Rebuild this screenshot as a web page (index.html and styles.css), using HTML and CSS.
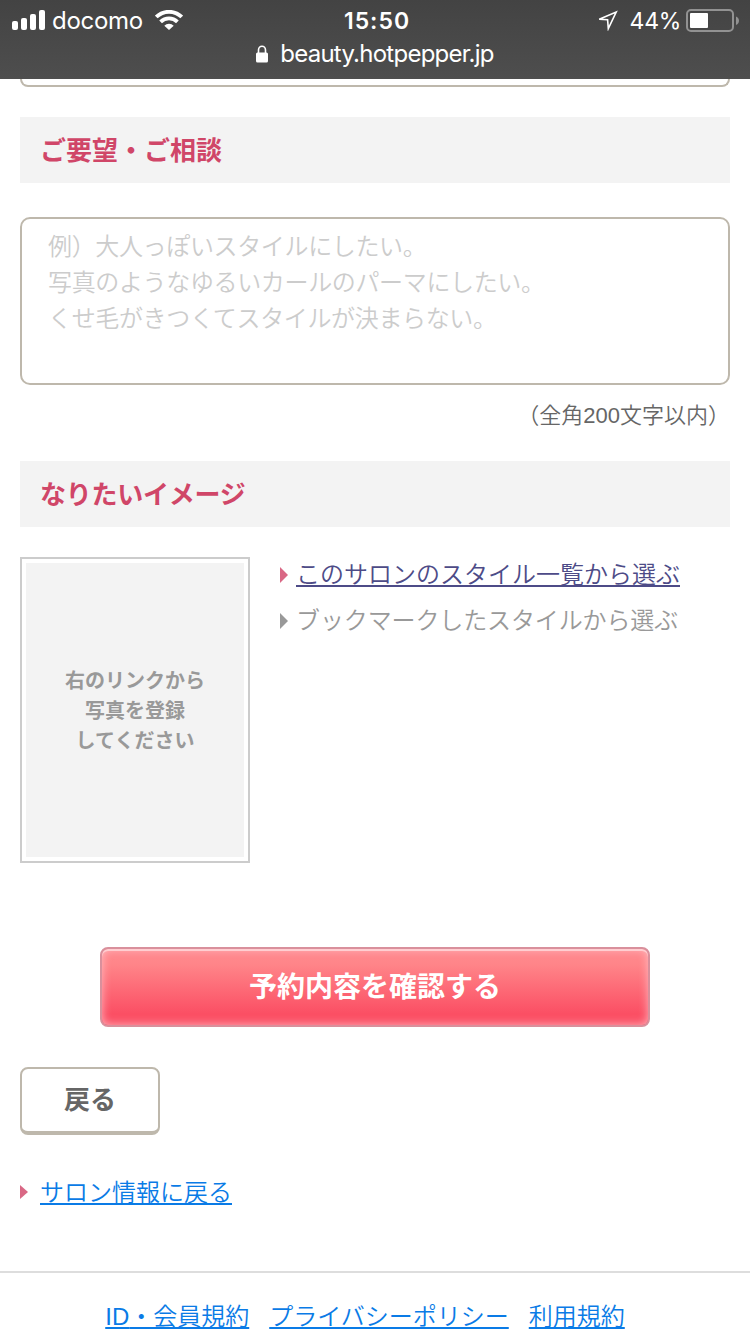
FILE: index.html
```html
<!DOCTYPE html>
<html lang="ja">
<head>
  <meta charset="UTF-8">
  <meta name="viewport" content="width=device-width, initial-scale=1.0">
  <title>予約内容の入力</title>
  <link rel="stylesheet" href="styles.css">
</head>
<body>
  <header class="browser-bar">
    <div class="status">
      <div class="status-left">
        <svg class="signal" width="34" height="20" viewBox="0 0 34 20" fill="#fff">
          <rect x="0" y="11" width="6" height="9" rx="2"/>
          <rect x="9" y="8" width="6" height="12" rx="2"/>
          <rect x="18" y="4" width="6" height="16" rx="2"/>
          <rect x="27" y="0" width="6" height="20" rx="2"/>
        </svg>
        <span class="carrier">docomo</span>
        <svg class="wifi" width="28" height="20" viewBox="0 0 28 20">
          <g fill="none" stroke="#fff" stroke-width="3.8">
            <path d="M1.3 7a18 18 0 0 1 25.4 0"/>
            <path d="M5.6 11.800a11.800 11.800 0 0 1 16.800 0"/>
          </g>
          <path d="M9.300 15.800a6.600 6.600 0 0 1 9.400 0L14 20z" fill="#fff"/>
        </svg>
      </div>
      <span class="clock">15:50</span>
      <div class="status-right">
        <svg class="location" width="22" height="22" viewBox="0 0 22 22">
          <path d="M3.2 10.2L20.2 3L12.3 19.6L11.6 10.7Z" fill="none" stroke="#fff" stroke-width="1.6"/>
        </svg>
        <span class="percent">44%</span>
        <svg class="battery" width="54" height="24" viewBox="0 0 54 24">
          <rect x="1" y="1" width="46" height="21" rx="4" fill="none" stroke="#929292" stroke-width="2"/>
          <rect x="4" y="4" width="18" height="15" rx="1" fill="#fff"/>
          <path d="M50 7.500c4 1.500 4 7 0 8.500z" fill="#929292"/>
        </svg>
      </div>
    </div>
    <div class="address">
      <svg class="lock" width="12" height="18" viewBox="0 0 12 18">
        <path d="M2.500 9V5a3.500 3.700 0 0 1 7 0v4" fill="none" stroke="#fff" stroke-width="1.600"/>
        <rect x="0" y="7.500" width="12" height="10" rx="1.500" fill="#fff"/>
      </svg>
      <span class="domain">beauty.hotpepper.jp</span>
    </div>
  </header>

  <main class="content">
    <div class="prev-field"></div>

    <h2 class="heading">ご要望・ご相談</h2>
    <textarea class="request" placeholder="例）大人っぽいスタイルにしたい。
写真のようなゆるいカールのパーマにしたい。
くせ毛がきつくてスタイルが決まらない。"></textarea>
    <p class="note">（全角<span class="num">200</span>文字以内）</p>

    <h2 class="heading kana">なりたいイメージ</h2>
    <div class="image-area">
      <div class="photo">
        <p>右のリンクから<br>写真を登録<br>してください</p>
      </div>
      <ul class="links">
        <li><a href="#">このサロンのスタイル一覧から選ぶ</a></li>
        <li class="disabled">ブックマークしたスタイルから選ぶ</li>
      </ul>
    </div>

    <button class="confirm" type="submit">予約内容を確認する</button>
    <button class="back" type="button">戻る</button>
    <p class="salon-link"><a href="#">サロン情報に戻る</a></p>
  </main>

  <footer class="footer">
    <a href="#"><span class="num">ID</span>・会員規約</a>
    <a href="#">プライバシーポリシー</a>
    <a href="#">利用規約</a>
  </footer>
</body>
</html>
```
FILE: styles.css
```css
* {
  box-sizing: border-box;
}
body {
  margin: 0;
  height: 1334px;
  overflow: hidden;
  background: #fff;
  color: #666;
  font-family: "Noto Sans CJK JP", sans-serif;
  font-size: 24px;
  font-weight: 350;
}
h2, p, ul {
  margin: 0;
  padding: 0;
}
a {
  color: #0a7be6;
  text-decoration: underline;
  text-decoration-thickness: 2px;
  text-underline-offset: 2px;
}
.num {
  font-family: "Liberation Sans", Arial, sans-serif;
}

/* status bar */
.browser-bar {
  height: 79px;
  background: linear-gradient(#434343, #4e4e4e);
  color: #fff;
  font-family: Inter, sans-serif;
  font-weight: 400;
}
.status {
  display: grid;
  grid-template-columns: 1fr auto 1fr;
  align-items: center;
  height: 40px;
  padding: 0 10px 0 12px;
}
.status-left, .status-right {
  display: flex;
  align-items: center;
}
.status-right {
  justify-content: flex-end;
}
.carrier {
  margin: 0 12px 0 6px;
  letter-spacing: -0.3px;
}
.clock {
  padding: 2px 0 0 2px;
  font-weight: 600;
  font-size: 23px;
  letter-spacing: 1px;
}
.location {
  margin-right: 12px;
}
.percent {
  padding-top: 2px;
  font-size: 23px;
  letter-spacing: -0.3px;
  margin-right: 5px;
}
.battery {
  margin-top: 1px;
}
.address {
  display: flex;
  justify-content: center;
  align-items: center;
  gap: 12px;
  height: 28px;
}
.domain {
  padding-bottom: 2px;
  font-size: 24px;
  letter-spacing: -0.75px;
}

.content {
  padding: 0 20px;
}
.prev-field {
  height: 8px;
  border: 2px solid #beb8ac;
  border-top: 0;
  border-radius: 0 0 10px 10px;
  margin-bottom: 30px;
}
.heading {
  height: 66px;
  padding-left: 20px;
  background: #f3f3f3;
  color: #d04668;
  font-size: 26px;
  font-weight: 700;
  line-height: 63px;
}
.kana {
  letter-spacing: -0.25px;
}
.request {
  display: block;
  width: 100%;
  height: 168px;
  margin: 34px 0 8px;
  padding: 8px 26px;
  border: 2px solid #beb8ac;
  border-radius: 10px;
  resize: none;
  font: inherit;
  line-height: 36px;
}
.request::placeholder {
  color: #ccc;
  letter-spacing: -0.35px;
}
.note {
  height: 68px;
  text-align: right;
  font-size: 22px;
  line-height: 40px;
}

/* photo box and style links */
.image-area {
  display: flex;
  gap: 30px;
  margin: 30px 0 84px;
}
.photo {
  display: flex;
  align-items: center;
  justify-content: center;
  width: 230px;
  height: 306px;
  padding: 4px;
  border: 2px solid #ccc;
  background: linear-gradient(#f3f3f3, #f3f3f3) content-box;
  color: #999;
  font-size: 20px;
  font-weight: 700;
  line-height: 30px;
  text-align: center;
}
.links {
  list-style: none;
  line-height: 46px;
  margin-top: -7px;
}
.links li, .salon-link {
  display: flex;
  align-items: center;
}
.links li::before, .salon-link::before {
  content: "";
  border-left: 8px solid #d96885;
  border-top: 8px solid transparent;
  border-bottom: 8px solid transparent;
  margin: 4px 8px 0 0;
}
.links a {
  color: #4d4b87;
}
.links .disabled {
  color: #999;
  letter-spacing: -0.12px;
}
.links .disabled::before {
  border-left-color: #999;
}

.confirm {
  display: block;
  width: 550px;
  height: 80px;
  margin: 0 auto 40px;
  padding: 0 0 4px;
  border: 2px solid #d9909c;
  border-radius: 8px;
  background: linear-gradient(#ff8a90, #ff8589 20%, #fb4f64 85%);
  box-shadow: inset 0 2px 0 #ffced1, inset 0 0 10px rgba(255, 205, 210, 0.8);
  color: #fff;
  font-family: inherit;
  font-size: 28px;
  font-weight: 700;
}
.back {
  display: block;
  width: 140px;
  height: 68px;
  padding: 0 0 6px;
  border: 2px solid #beb8ac;
  border-bottom-width: 4px;
  border-radius: 8px;
  background: #fff;
  color: #666;
  font-family: inherit;
  font-size: 26px;
  font-weight: 700;
}
.salon-link {
  height: 40px;
  margin: 35px 0 61px;
}
.salon-link::before {
  border-top-width: 7px;
  border-bottom-width: 7px;
  margin-right: 12px;
}

.footer {
  display: flex;
  justify-content: center;
  gap: 20px;
  padding: 22px 20px 0 0;
  border-top: 2px solid #ddd;
  line-height: 40px;
}
```
